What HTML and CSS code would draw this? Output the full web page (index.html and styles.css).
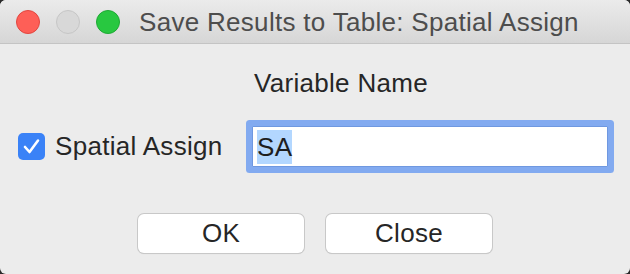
FILE: index.html
```html
<!DOCTYPE html>
<html>
  <head>
    <title>Save Results to Table</title>
    <link rel="stylesheet" href="styles.css">
  </head>
  <body>
    <div class="window">
      <div class="titlebar">
        <span class="light light-close"></span>
        <span class="light light-min"></span>
        <span class="light light-max"></span>
        <span class="title">Save Results to Table: Spatial Assign</span>
      </div>
      <div class="content">
        <div class="header">Variable Name</div>
        <div class="row">
          <label class="check">
            <span class="box">
              <svg width="27" height="27" viewBox="0 0 27 27">
                <path d="M7 14 L11.5 19 L20 7.5" fill="none" stroke="#fff" stroke-width="2.6" stroke-linecap="round" stroke-linejoin="round"/>
              </svg>
            </span>
            Spatial Assign
          </label>
          <div class="field"><span class="selected">SA</span></div>
        </div>
        <div class="buttons">
          <button class="btn">OK</button>
          <button class="btn">Close</button>
        </div>
      </div>
    </div>
  </body>
</html>
```

FILE: styles.css
```css
body {
  margin: 0;
  background-color: #2a2a2a;
  font-family: "Liberation Sans", Arial, sans-serif;
  letter-spacing: 0.3px;
}

.window {
  width: 630px;
  height: 274px;
  background-color: #ececec;
  border-radius: 6px;
  overflow: hidden;
}

.titlebar {
  height: 43px;
  display: flex;
  align-items: center;
  padding-left: 16px;
  background: linear-gradient(#ebebeb, #d6d6d6);
  border-bottom: 1px solid #c4c4c4;
}

.light {
  width: 24px;
  height: 24px;
  border-radius: 50%;
  margin-right: 16px;
  box-sizing: border-box;
}

.light-close {
  background-color: #fe5f57;
  border: 1px solid #e2463f;
}

.light-min {
  background-color: #d8d8d8;
  border: 1px solid #c6c6c6;
}

.light-max {
  background-color: #28c840;
  border: 1px solid #1ea934;
  margin-right: 19px;
}

.title {
  font-size: 26px;
  color: #4d4d4d;
  margin-top: 1px;
}

.content {
  display: flex;
  flex-direction: column;
}

.header {
  margin-top: 24px;
  padding-left: 52px;
  text-align: center;
  font-size: 26px;
  line-height: 30px;
  color: #262626;
}

.row {
  display: flex;
  align-items: center;
  margin-top: 28px;
  padding-left: 18px;
}

.check {
  display: flex;
  align-items: center;
  font-size: 26px;
  color: #262626;
  width: 234px;
}

.box {
  width: 27px;
  height: 27px;
  border-radius: 5px;
  background-color: #3a82f7;
  margin-right: 10px;
  display: flex;
}

.field {
  width: 356px;
  height: 41px;
  background-color: #fff;
  border: 1px solid #6f98e0;
  box-shadow: 0 0 0 6px #82aaf0;
  border-radius: 1px;
  display: flex;
  align-items: center;
  padding-left: 4px;
  box-sizing: border-box;
}

.selected {
  background-color: #b3d7ff;
  font-size: 26px;
  line-height: 34px;
  color: #1e1e1e;
}

.buttons {
  display: flex;
  justify-content: center;
  gap: 22px;
  margin-top: 47px;
}

.btn {
  width: 166px;
  height: 39px;
  background-color: #fff;
  border: none;
  border-radius: 6px;
  box-shadow: 0 0 0 1px #c8c8c8, 0 1px 1px rgba(0, 0, 0, 0.15);
  font-family: "Liberation Sans", Arial, sans-serif;
  font-size: 26px;
  letter-spacing: 0.3px;
  color: #262626;
  padding: 0;
}
```
